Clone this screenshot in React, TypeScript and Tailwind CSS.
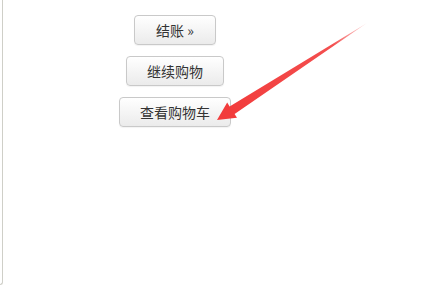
const btn =
  "h-[30px] rounded-[4px] border border-[#c9c9c9] bg-gradient-to-b from-white to-[#ebebeb] text-[14px] leading-[28px] text-[#333] shadow-[0_1px_1px_rgba(0,0,0,0.05)]";

export default function App() {
  return (
    <div
      className="relative h-[301px] w-[448px] overflow-hidden bg-white"
      style={{ fontFamily: '"Noto Sans CJK SC", "Liberation Sans", sans-serif' }}
    >
      <div className="flex">
        <div className="h-[285px] w-[3px] rounded-br-[3px] border-r border-b border-[#cfcfc8]" />
        <div className="flex w-[344px] flex-col items-center gap-[11px] pt-[15px]">
          <button className={`${btn} px-[21px]`}>结账 »</button>
          <button className={`${btn} px-[20px]`}>继续购物</button>
          <button className={`${btn} px-[20px]`}>查看购物车</button>
        </div>
      </div>

      <svg className="pointer-events-none absolute left-0 top-0" width="448" height="301" aria-hidden>
        <defs>
          <linearGradient id="fade" x1="367" y1="23" x2="232" y2="110" gradientUnits="userSpaceOnUse">
            <stop offset="0" stopColor="#f23c3c" stopOpacity="0.15" />
            <stop offset="0.25" stopColor="#f23c3c" stopOpacity="0.9" />
            <stop offset="1" stopColor="#f23c3c" />
          </linearGradient>
        </defs>
        <polygon
          points="217,120 237,117.8 234.6,113.9 367,23 229.6,106.5 227.2,102.6"
          fill="url(#fade)"
        />
      </svg>
    </div>
  );
}
